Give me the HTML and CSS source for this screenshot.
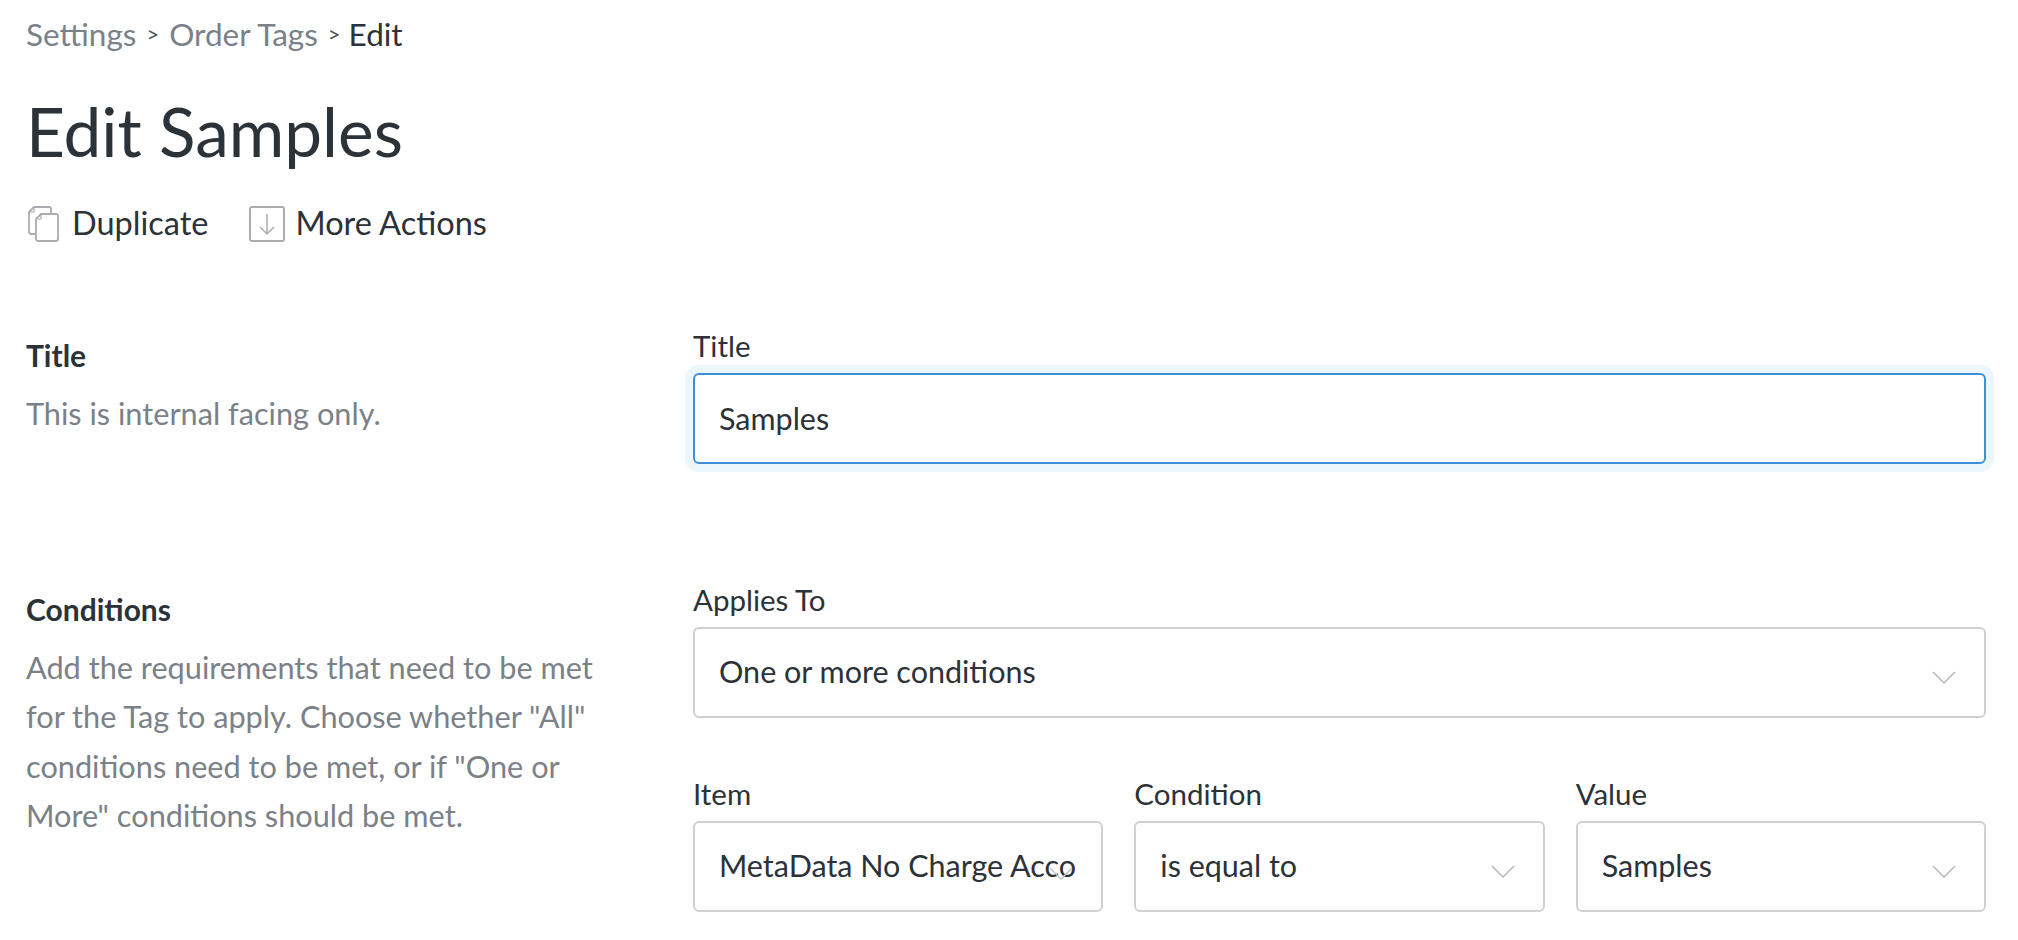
FILE: index.html
```html
<!DOCTYPE html>
<html lang="en">
<head>
    <meta charset="UTF-8">
    <meta name="viewport" content="width=device-width, initial-scale=1.0">
    <title>Edit Samples</title>
    <link rel="stylesheet" href="styles.css">
</head>
<body>
<main class="page">
    <nav class="breadcrumb">
      <span class="crumb-link">Settings</span>
      <span class="crumb-sep">&gt;</span>
      <span class="crumb-link">Order Tags</span>
      <span class="crumb-sep">&gt;</span>
      <span class="crumb-current">Edit</span>
    </nav>

    <h1 class="page-title">Edit Samples</h1>

    <div class="actions">
      <span class="action">
        <svg class="action-icon icon-copy" width="31" height="36" viewBox="0 0 31 36" fill="none" stroke="#a9adb1" stroke-width="1.8" stroke-linejoin="round">
          <path d="M7 28H3a2 2 0 0 1-2-2V6l5-5h15a2 2 0 0 1 2 2v5"/>
          <path d="M1 6h5V1" stroke-width="1.2"/>
          <path d="M13 8h15a2 2 0 0 1 2 2v23a2 2 0 0 1-2 2H10a2 2 0 0 1-2-2V13z"/>
          <path d="M8 13h5V8" stroke-width="1.2"/>
        </svg>
        Duplicate
      </span>
      <span class="action">
        <svg class="action-icon" width="36" height="36" viewBox="0 0 36 36" fill="none" stroke="#a9adb1" stroke-width="2">
          <rect x="1" y="1" width="34" height="34" rx="2"/>
          <path d="M18 8v20M11 21l7 7 7-7" stroke-width="1.5"/>
        </svg>
        More Actions
      </span>
    </div>

    <section class="form-section section-title">
      <div class="section-info">
        <h3>Title</h3>
        <p>This is internal facing only.</p>
      </div>
      <div class="section-fields">
        <div class="field">
          <label>Title</label>
          <div class="input input-focus">Samples</div>
        </div>
      </div>
    </section>

    <section class="form-section">
      <div class="section-info">
        <h3>Conditions</h3>
        <p>Add the requirements that need to be met for the Tag to apply. Choose whether "All" conditions need to be met, or if "One or More" conditions should be met.</p>
      </div>
      <div class="section-fields">
        <div class="field field-applies">
          <label>Applies To</label>
          <div class="input select">
            One or more conditions
            <svg class="chevron" width="24" height="13" viewBox="0 0 24 13"><path d="M1 1l11 11L23 1"/></svg>
          </div>
        </div>
        <div class="field-row">
          <div class="field">
            <label>Item</label>
            <div class="input item-input">
              MetaData No Charge Acco
              <svg class="item-mark" width="24" height="13" viewBox="0 0 24 13"><path d="M1 1l11 11L23 1"/></svg>
            </div>
          </div>
          <div class="field">
            <label>Condition</label>
            <div class="input select">
              is equal to
              <svg class="chevron" width="24" height="13" viewBox="0 0 24 13"><path d="M1 1l11 11L23 1"/></svg>
            </div>
          </div>
          <div class="field">
            <label>Value</label>
            <div class="input select">
              Samples
              <svg class="chevron" width="24" height="13" viewBox="0 0 24 13"><path d="M1 1l11 11L23 1"/></svg>
            </div>
          </div>
        </div>
      </div>
    </section>
</main>
</body>
</html>
```

FILE: styles.css
```css
body {
  font-family: "Lato", "Open Sans", sans-serif;
  color: #2b3238;
  background: #fff;
  margin: 0;
  padding: 0;
  height: 940px;
  overflow: hidden;
}

.page {
  padding: 14px 32px 0 26px;
}

.breadcrumb {
  display: flex;
  align-items: center;
  font-size: 31.5px;
  line-height: 40px;
}

.crumb-link {
  color: #7b8188;
}

.crumb-sep {
  font-size: 22px;
  margin: 0 10px;
  color: #4a5056;
}

.crumb-current {
  margin-left: -2px;
}

.page-title {
  font-size: 67.5px;
  font-weight: 400;
  line-height: 80px;
  margin: 37px 0 0;
}

.actions {
  display: flex;
  gap: 41px;
  margin-top: 30px;
  font-size: 32.5px;
  line-height: 44px;
}

.action {
  display: flex;
  align-items: center;
  gap: 10px;
}

.action-icon {
  margin-top: 2px;
}

.icon-copy {
  margin-left: 2px;
  margin-right: 3px;
}

.form-section {
  display: flex;
}

.section-title {
  margin-top: 83px;
  height: 254px;
}

.section-info {
  width: 667px;
  flex: none;
}

.section-info h3 {
  font-size: 30px;
  font-weight: 700;
  line-height: 36px;
  margin: 9px 0 0;
}

.section-info p {
  font-size: 30.7px;
  line-height: 49.4px;
  color: #7b8188;
  margin: 16px 0 0;
  width: 590px;
}

.section-fields {
  flex: 1;
}

.field label {
  display: block;
  font-size: 29.5px;
  line-height: 36px;
  margin-bottom: 9px;
}

.field-applies {
  margin-bottom: 58px;
}

.field-row {
  display: grid;
  grid-template-columns: repeat(3, minmax(0, 1fr));
  gap: 31px;
}

.input {
  position: relative;
  box-sizing: border-box;
  height: 91px;
  padding: 0 24px;
  border: 2px solid #d0d0d0;
  border-radius: 6px;
  font-size: 30.5px;
  line-height: 85px;
  white-space: nowrap;
}

.input-focus {
  border-color: #3f8fd6;
  box-shadow: 0 0 0 8px #ebf6fd;
  line-height: 87px;
}

.chevron {
  position: absolute;
  right: 28px;
  top: 42px;
}

.chevron path {
  fill: none;
  stroke: #b5b8bb;
  stroke-width: 1.5;
}

.item-mark {
  position: absolute;
  right: 28px;
  top: 44px;
}

.item-mark path {
  fill: none;
  stroke: #c4c6c8;
  stroke-width: 1.5;
}
```
